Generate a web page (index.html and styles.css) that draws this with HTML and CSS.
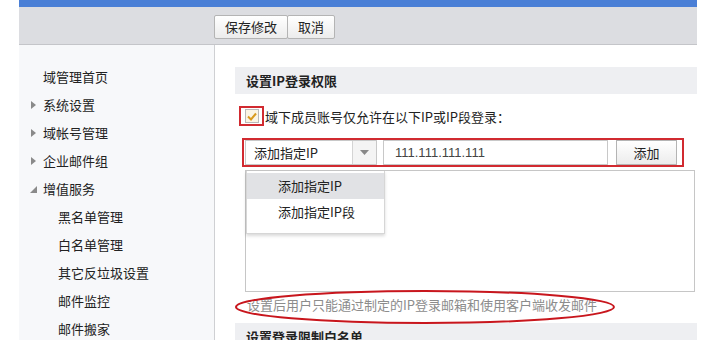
FILE: index.html
```html
<!DOCTYPE html>
<html lang="zh-CN">
<head>
    <meta charset="UTF-8">
    <title>设置IP登录权限</title>
    <link rel="stylesheet" href="styles.css">
</head>
<body>
    <div class="page">
        <div class="topbar"></div>
        <div class="toolbar">
            <div class="btn-group">
                <button class="btn">保存修改</button>
                <button class="btn">取消</button>
            </div>
        </div>
        <div class="layout">
            <ul class="sidebar">
                <li class="nav-item">域管理首页</li>
                <li class="nav-item has-arrow"><span class="arrow right"></span>系统设置</li>
                <li class="nav-item has-arrow"><span class="arrow right"></span>域帐号管理</li>
                <li class="nav-item has-arrow"><span class="arrow right"></span>企业邮件组</li>
                <li class="nav-item has-arrow"><span class="arrow open"></span>增值服务</li>
                <li class="nav-item sub">黑名单管理</li>
                <li class="nav-item sub">白名单管理</li>
                <li class="nav-item sub">其它反垃圾设置</li>
                <li class="nav-item sub">邮件监控</li>
                <li class="nav-item sub">邮件搬家</li>
            </ul>
            <div class="main">
                <div class="section-title">设置IP登录权限</div>
                <label class="check-row">
                    <span class="mark-box">
                        <span class="checkbox">
                            <svg width="10" height="9" viewBox="0 0 10 9"><path d="M1 4.5 L4 7.5 L9 1.5" fill="none" stroke="#d99a1e" stroke-width="2"/></svg>
                        </span>
                    </span>
                    域下成员账号仅允许在以下IP或IP段登录：
                </label>
                <div class="add-row">
                    <div class="select">
                        <span class="select-text">添加指定IP</span>
                        <span class="select-arrow"><svg width="9" height="5" viewBox="0 0 9 5"><path d="M0 0 H9 L4.5 5 Z" fill="#888"/></svg></span>
                    </div>
                    <input class="ip-input" type="text" value="111.111.111.111">
                    <button class="btn add-btn">添加</button>
                </div>
                <div class="list-wrap">
                    <textarea class="ip-list"></textarea>
                    <ul class="dropdown">
                        <li class="active">添加指定IP</li>
                        <li>添加指定IP段</li>
                    </ul>
                </div>
                <div class="hint">
                    设置后用户只能通过制定的IP登录邮箱和使用客户端收发邮件
                    <svg class="ring" width="382" height="36" viewBox="0 0 382 36"><ellipse cx="191" cy="18" rx="189" ry="16" fill="none" stroke="#c8161d" stroke-width="2"/></svg>
                </div>
                <div class="section-title">设置登录限制白名单</div>
            </div>
        </div>
    </div>
</body>
</html>
```

FILE: styles.css
```css
body {
    margin: 0;
    font-family: "Noto Sans CJK SC", "Liberation Sans", sans-serif;
    font-size: 13px;
    color: #222;
    background: #fff;
    overflow: hidden;
}
.page {
    width: 678px;
    margin-left: 19px;
}
.topbar {
    height: 7px;
    background: #4a7fd6;
}
.toolbar {
    height: 38px;
    background: #dcdde1;
    border-bottom: 1px solid #c4c5c9;
    padding: 8px 0 0 195px;
    box-sizing: border-box;
}
.btn-group {
    display: flex;
}
.btn {
    height: 24px;
    padding: 0 10px;
    font-family: inherit;
    font-size: 13px;
    color: #222;
    background: linear-gradient(#ffffff, #ececec);
    border: 1px solid #b4b4b4;
    border-radius: 2px;
    line-height: 22px;
}
.btn-group .btn + .btn {
    margin-left: -1px;
}
.layout {
    display: flex;
    height: 300px;
}
.sidebar {
    width: 195px;
    margin: 0;
    padding: 18px 0 0;
    list-style: none;
    background: #f7f8fa;
    border-right: 1px solid #cfd0d3;
}
.nav-item {
    height: 28px;
    line-height: 28px;
    padding-left: 24px;
    position: relative;
}
.nav-item.sub {
    padding-left: 39px;
}
.arrow {
    position: absolute;
    left: 12px;
    top: 10px;
    width: 0;
    height: 0;
}
.arrow.right {
    border-left: 5px solid #8a8a8a;
    border-top: 4.5px solid transparent;
    border-bottom: 4.5px solid transparent;
}
.arrow.open {
    left: 11px;
    top: 11px;
    border-bottom: 7px solid #8a8a8a;
    border-left: 7px solid transparent;
}
.main {
    flex: 1;
    padding: 22px 0 0 20px;
}
.section-title {
    height: 27px;
    line-height: 27px;
    padding-left: 11px;
    background: #eeeff2;
    font-weight: bold;
}
.check-row {
    display: flex;
    align-items: center;
    margin: 12px 0 0 4px;
    height: 20px;
}
.mark-box {
    width: 21px;
    height: 16px;
    border: 2px solid #d12a30;
    display: flex;
    align-items: center;
    justify-content: center;
    margin-right: 1px;
}
.checkbox {
    width: 12px;
    height: 12px;
    border: 1px solid #b9b9b9;
    background: #fbf4e4;
    display: flex;
    align-items: center;
    justify-content: center;
}
.add-row {
    display: flex;
    align-items: center;
    margin: 12px 0 0 7px;
    width: 435px;
    height: 25px;
    padding: 0 2px 0 1px;
    box-sizing: content-box;
    border: 2px solid #d12a30;
}
.select {
    display: flex;
    width: 132px;
    height: 25px;
    box-sizing: border-box;
    border: 1px solid #c8c8c8;
}
.select-text {
    flex: 1;
    padding-left: 8px;
    line-height: 23px;
    border-right: 1px solid #d4d4d4;
}
.select-arrow {
    width: 23px;
    background: #f4f4f4;
    display: flex;
    align-items: center;
    justify-content: center;
}
.ip-input {
    width: 225px;
    height: 25px;
    box-sizing: border-box;
    margin-left: 6px;
    padding: 0 0 0 11px;
    border: 1px solid #c8c8c8;
    font-family: "Liberation Sans", sans-serif;
    font-size: 13px;
    color: #444;
}
.add-btn {
    width: 61px;
    height: 25px;
    margin-left: 8px;
    border-radius: 0;
}
.list-wrap {
    position: relative;
    margin: 3px 0 0 10px;
}
.ip-list {
    display: block;
    width: 450px;
    height: 122px;
    box-sizing: border-box;
    border: 1px solid #c6c6c6;
    resize: none;
    margin: 0;
}
.dropdown {
    position: absolute;
    left: 1px;
    top: 1px;
    width: 137px;
    margin: 0;
    padding: 2px 0 8px;
    list-style: none;
    background: #fff;
    border: 1px solid #d6d6d6;
    border-top: none;
    box-shadow: 0 2px 3px rgba(0, 0, 0, 0.15);
}
.dropdown li {
    height: 26px;
    line-height: 26px;
    padding-left: 31px;
}
.dropdown li.active {
    background: #e1e2e5;
}
.hint {
    position: relative;
    height: 31px;
    line-height: 26px;
    padding-left: 12px;
    color: #8c8c8c;
}
.ring {
    position: absolute;
    left: -1px;
    top: -3px;
}
```
